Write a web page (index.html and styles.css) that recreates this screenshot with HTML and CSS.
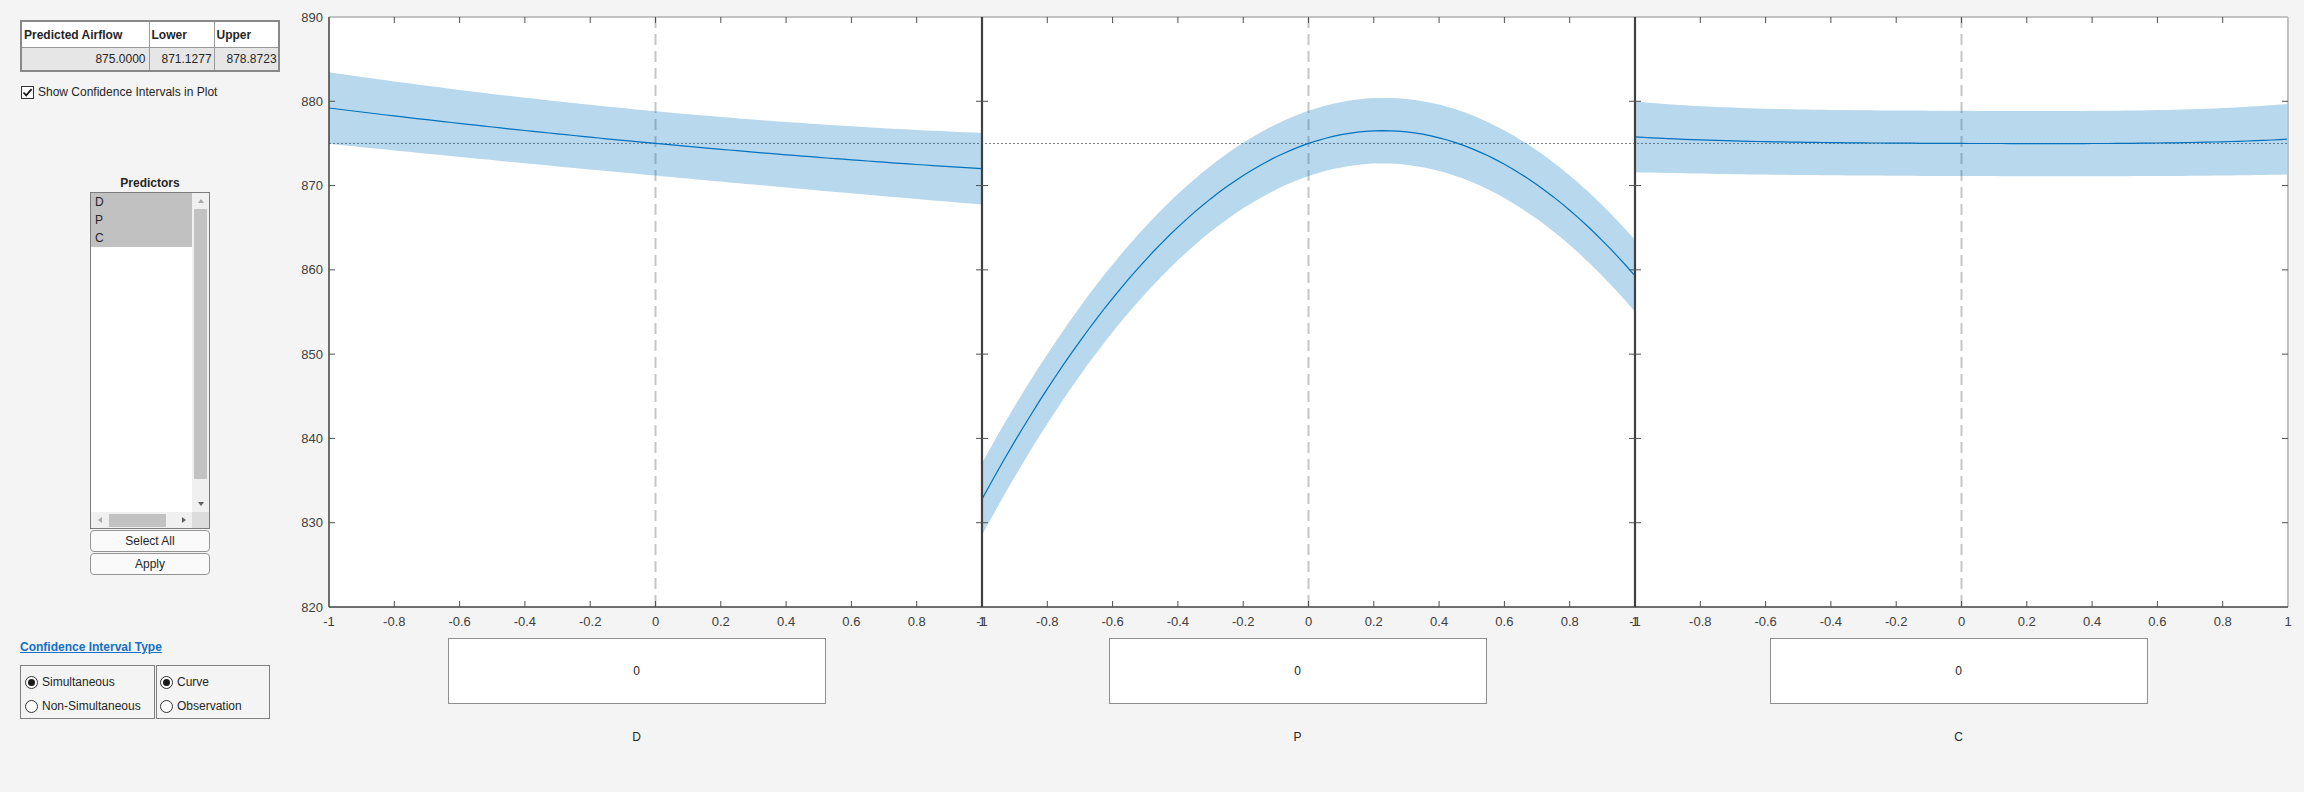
FILE: index.html
```html
<!DOCTYPE html>
<html lang="en">
<head>
<meta charset="UTF-8">
<title>Prediction Slice Plot</title>
<link rel="stylesheet" href="styles.css">
</head>
<body>
<div class="app">
    <!-- left control panel -->
    <div class="sidebar">
        <table class="pred-table">
            <colgroup>
                <col class="col-pred">
                <col class="col-ci">
                <col class="col-ci">
            </colgroup>
            <tr>
                <th>Predicted Airflow</th>
                <th>Lower</th>
                <th>Upper</th>
            </tr>
            <tr>
                <td class="num-right">875.0000</td>
                <td class="num-left">871.1277</td>
                <td class="num-left">878.8723</td>
            </tr>
        </table>

        <label class="check">
            <span class="check-box">
                <svg width="11" height="11" viewBox="0 0 11 11"><path d="M1.5 5.5 L4.2 8.4 L9.6 2.2" /></svg>
            </span>
            Show Confidence Intervals in Plot
        </label>

        <div class="predictors">
            <div class="pred-title">Predictors</div>
            <div class="listbox">
                <div class="list-items">
                    <div class="list-item selected">D</div>
                    <div class="list-item selected">P</div>
                    <div class="list-item selected">C</div>
                </div>
                <div class="vscroll">
                    <div class="arrow-box"><span class="arrow up"></span></div>
                    <div class="vthumb"></div>
                    <div class="spacer"></div>
                    <div class="arrow-box"><span class="arrow down"></span></div>
                </div>
                <div class="hscroll">
                    <div class="arrow-box"><span class="arrow left"></span></div>
                    <div class="hthumb"></div>
                    <div class="spacer"></div>
                    <div class="arrow-box"><span class="arrow right"></span></div>
                </div>
                <div class="corner"></div>
            </div>
            <button class="btn">Select All</button>
            <button class="btn">Apply</button>
        </div>

        <a href="#" class="ci-link">Confidence Interval Type</a>
        <div class="radio-group">
            <div class="radio-box radio-left">
                <div class="radio-row"><span class="radio on"></span>Simultaneous</div>
                <div class="radio-row"><span class="radio"></span>Non-Simultaneous</div>
            </div>
            <div class="radio-box radio-right">
                <div class="radio-row"><span class="radio on"></span>Curve</div>
                <div class="radio-row"><span class="radio"></span>Observation</div>
            </div>
        </div>
    </div>

    <!-- plot + predictor values -->
    <div class="main">
        <svg id="plot" width="2014" height="632" viewBox="290 0 2014 632"></svg>
        <div class="controls">
            <div class="slot">
                <div class="value-box">0</div>
                <div class="pred-name">D</div>
            </div>
            <div class="slot">
                <div class="value-box">0</div>
                <div class="pred-name">P</div>
            </div>
            <div class="slot">
                <div class="value-box">0</div>
                <div class="pred-name">C</div>
            </div>
        </div>
    </div>
</div>

<script>
    const NS = 'http://www.w3.org/2000/svg';
    const svg = document.getElementById('plot');
    const TOP = 17, BOTTOM = 607, LEFT = 329, W = 653;
    const YMAX = 890, YMIN = 820;

    function y(v) {
        return TOP + (YMAX - v) * (BOTTOM - TOP) / (YMAX - YMIN);
    }
    function el(tag, attrs, text) {
        const e = document.createElementNS(NS, tag);
        for (const k in attrs) e.setAttribute(k, attrs[k]);
        if (text !== undefined) e.textContent = text;
        svg.appendChild(e);
        return e;
    }

    // fitted response and half width of the interval for each predictor
    const panels = [
        { m: t => 875 - 3.6 * t + 0.6 * t * t,            h: t => 3.82 + 0.43 * t * t },
        { m: t => 875 + 13.25 * t - 28.95 * t * t,        h: t => 3.87 + 0.4 * t * t },
        { m: t => 875 - 0.14 * t + 0.2 * t * t + 0.44 * t ** 4, h: t => 3.87 + 0.32 * t ** 4 }
    ];

    el('rect', { x: LEFT, y: TOP, width: 3 * W, height: BOTTOM - TOP, fill: '#fff' });

    // reference lines
    panels.forEach((p, i) => {
        const cx = LEFT + i * W + W / 2;
        el('line', { x1: cx, y1: TOP, x2: cx, y2: BOTTOM, class: 'ref-v' });
    });
    el('line', { x1: LEFT, y1: y(875), x2: LEFT + 3 * W, y2: y(875), class: 'ref-h' });

    // confidence band + fit
    const N = 80;
    panels.forEach((p, i) => {
        const x0 = LEFT + i * W;
        const up = [], lo = [], mid = [];
        for (let k = 0; k <= N; k++) {
            const t = -1 + 2 * k / N;
            const px = (x0 + (t + 1) / 2 * W).toFixed(1);
            up.push(px + ',' + y(p.m(t) + p.h(t)).toFixed(1));
            lo.unshift(px + ',' + y(p.m(t) - p.h(t)).toFixed(1));
            mid.push(px + ',' + y(p.m(t)).toFixed(1));
        }
        el('path', { d: 'M' + up.join('L') + 'L' + lo.join('L') + 'Z', class: 'band' });
        el('path', { d: 'M' + mid.join('L'), class: 'fit' });
    });

    // axes
    el('line', { x1: LEFT, y1: TOP, x2: LEFT + 3 * W, y2: TOP, class: 'box-edge' });
    el('line', { x1: LEFT + 3 * W, y1: TOP, x2: LEFT + 3 * W, y2: BOTTOM, class: 'box-edge' });
    el('line', { x1: LEFT, y1: BOTTOM, x2: LEFT + 3 * W, y2: BOTTOM, class: 'axis' });
    for (let i = 0; i < 3; i++) {
        const x0 = LEFT + i * W;
        el('line', { x1: x0, y1: TOP, x2: x0, y2: BOTTOM, class: i ? 'axis sep' : 'axis' });
    }

    // ticks
    const xl = ['-1', '-0.8', '-0.6', '-0.4', '-0.2', '0', '0.2', '0.4', '0.6', '0.8', '1'];
    for (let i = 0; i < 3; i++) {
        const x0 = LEFT + i * W;
        for (let j = 1; j < 10; j++) {
            const px = x0 + j * W / 10;
            el('line', { x1: px, y1: BOTTOM, x2: px, y2: BOTTOM - 6, class: 'tick' });
            el('line', { x1: px, y1: TOP, x2: px, y2: TOP + 6, class: 'tick' });
        }
        for (let v = 830; v < 890; v += 10) {
            el('line', { x1: x0, y1: y(v), x2: x0 + 6, y2: y(v), class: 'tick' });
            el('line', { x1: x0 + W, y1: y(v), x2: x0 + W - 6, y2: y(v), class: 'tick' });
        }
        for (let j = 0; j <= 10; j++) {
            el('text', { x: x0 + j * W / 10, y: 621, class: 'tick-label xlab' }, xl[j]);
        }
    }
    for (let v = YMIN; v <= YMAX; v += 10) {
        el('text', { x: LEFT - 6, y: y(v), class: 'tick-label ylab' }, v);
    }
</script>
</body>
</html>
```

FILE: styles.css
```css
body {
    margin: 0;
    padding: 0;
    width: 2304px;
    height: 792px;
    overflow: hidden;
    background-color: #f4f4f4;
    font-family: "Liberation Sans", Arial, sans-serif;
    font-size: 12px;
    color: #262626;
}
.app {
    display: flex;
}
/* left panel */
.sidebar {
    width: 290px;
    padding: 20px 0 0 20px;
    box-sizing: border-box;
    display: flex;
    flex-direction: column;
    align-items: flex-start;
}
.pred-table {
    width: 260px;
    table-layout: fixed;
    border-collapse: collapse;
    border: 2px solid #888;
    background-color: #fff;
}
.col-pred {
    width: 128px;
}
.col-ci {
    width: 65px;
}
.pred-table th,
.pred-table td {
    border: 1px solid #9a9a9a;
    white-space: nowrap;
    overflow: hidden;
    padding: 0;
}
.pred-table th {
    height: 25px;
    text-align: left;
    padding-left: 2px;
    font-weight: bold;
    color: #262626;
}
.pred-table td {
    height: 22px;
    background-color: #e6e6e6;
}
.num-right {
    text-align: right;
    padding-right: 3px !important;
}
.num-left {
    text-align: left;
    padding-left: 12px !important;
}
/* checkbox */
.check {
    display: flex;
    align-items: center;
    gap: 4px;
    height: 14px;
    margin: 13px 0 0 1px;
}
.check-box {
    width: 11px;
    height: 11px;
    border: 1px solid #333;
    background-color: #fff;
    display: flex;
}
.check-box path {
    fill: none;
    stroke: #1a1a1a;
    stroke-width: 1.8;
}
/* predictor list */
.predictors {
    width: 120px;
    margin: 77px 0 0 70px;
    display: flex;
    flex-direction: column;
}
.pred-title {
    font-weight: bold;
    text-align: center;
    line-height: 14px;
    margin-bottom: 2px;
}
.listbox {
    height: 337px;
    box-sizing: border-box;
    border: 1px solid #7c7c7c;
    background-color: #fff;
    display: grid;
    grid-template-columns: 1fr 17px;
    grid-template-rows: 1fr 16px;
}
.list-item {
    height: 18px;
    line-height: 18px;
    padding-left: 4px;
}
.list-item.selected {
    background-color: #c1c1c1;
}
.vscroll {
    background-color: #f0f0f0;
    display: flex;
    flex-direction: column;
    align-items: center;
}
.hscroll {
    background-color: #f0f0f0;
    display: flex;
    align-items: center;
}
.corner {
    background-color: #dcdcdc;
}
.arrow-box {
    width: 17px;
    height: 16px;
    display: flex;
    justify-content: center;
    align-items: center;
    flex-shrink: 0;
}
.spacer {
    flex: 1;
}
.vthumb {
    width: 13px;
    height: 270px;
    background-color: #c2c2c2;
}
.hthumb {
    width: 57px;
    height: 13px;
    margin-left: 1px;
    background-color: #c2c2c2;
}
.arrow {
    width: 0;
    height: 0;
    border: 3px solid transparent;
}
.arrow.up {
    border-bottom: 4px solid #a8a8a8;
    border-top-width: 0;
}
.arrow.down {
    border-top: 4px solid #606060;
    border-bottom-width: 0;
}
.arrow.left {
    border-right: 4px solid #a8a8a8;
    border-left-width: 0;
}
.arrow.right {
    border-left: 4px solid #606060;
    border-right-width: 0;
}
.btn {
    height: 22px;
    margin-top: 1px;
    padding: 0;
    border: 1px solid #959595;
    border-radius: 4px;
    background-color: #fafafa;
    font-family: inherit;
    font-size: 12px;
    color: #262626;
}
/* interval type */
.ci-link {
    margin-top: 65px;
    line-height: 14px;
    font-weight: bold;
    color: #1570c4;
    text-decoration: underline;
}
.radio-group {
    display: flex;
    gap: 1px;
    margin-top: 11px;
}
.radio-box {
    height: 54px;
    box-sizing: border-box;
    border: 1px solid #7f7f7f;
    padding-top: 4px;
}
.radio-left {
    width: 135px;
    padding-left: 4px;
}
.radio-right {
    width: 114px;
    padding-left: 3px;
}
.radio-row {
    display: flex;
    align-items: center;
    gap: 4px;
    height: 24px;
}
.radio {
    width: 11px;
    height: 11px;
    border: 1px solid #333;
    border-radius: 50%;
    background-color: #fff;
    display: flex;
    justify-content: center;
    align-items: center;
}
.radio.on::after {
    content: "";
    width: 7px;
    height: 7px;
    border-radius: 50%;
    background-color: #1a1a1a;
}
/* plot */
.main {
    width: 2014px;
    display: flex;
    flex-direction: column;
}
#plot {
    display: block;
}
.ref-v {
    stroke: #c6c6c6;
    stroke-width: 2;
    stroke-dasharray: 11 6;
}
.ref-h {
    stroke: #7a7a7a;
    stroke-width: 1;
    stroke-dasharray: 2 2;
}
.band {
    fill: #0072bd;
    fill-opacity: 0.28;
}
.fit {
    fill: none;
    stroke: #0072bd;
    stroke-width: 1.2;
}
.box-edge {
    stroke: #c2c2c2;
    stroke-width: 2;
}
.axis {
    stroke: #404040;
    stroke-width: 1.5;
}
.axis.sep {
    stroke-width: 2.2;
}
.tick {
    stroke: #505050;
    stroke-width: 1;
}
.tick-label {
    font-family: "Liberation Sans", Arial, sans-serif;
    font-size: 13px;
    fill: #404040;
    dominant-baseline: central;
}
.xlab {
    text-anchor: middle;
}
.ylab {
    text-anchor: end;
}
/* predictor values under the plot */
.controls {
    display: flex;
    margin-top: 6px;
    padding-left: 16px;
}
.slot {
    width: 661px;
    display: flex;
    flex-direction: column;
    align-items: center;
}
.value-box {
    width: 378px;
    height: 66px;
    box-sizing: border-box;
    border: 1px solid #8f8f8f;
    background-color: #fff;
    display: flex;
    justify-content: center;
    align-items: center;
}
.pred-name {
    margin-top: 26px;
    line-height: 14px;
}
```
